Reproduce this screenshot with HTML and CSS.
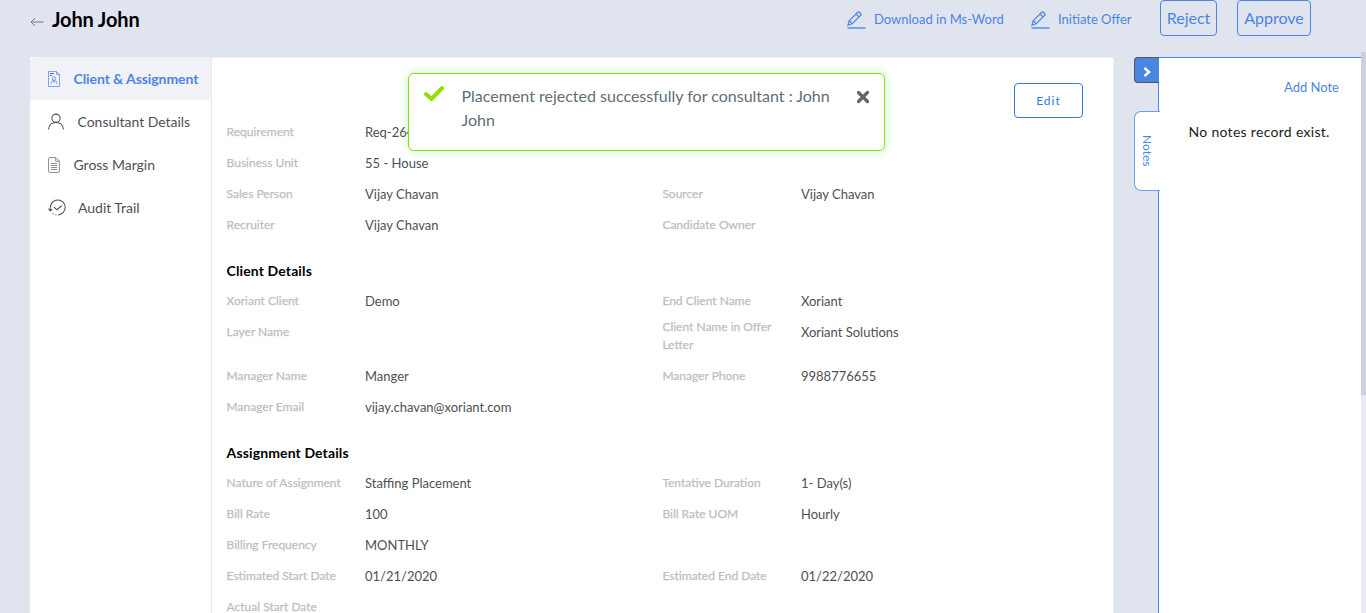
FILE: index.html
```html
<!DOCTYPE html>
<html lang="en">
<head>
<meta charset="utf-8">
<title>John John - Placement</title>
<link rel="stylesheet" href="styles.css">
</head>
<body>
<svg class="defs" width="0" height="0">
  <symbol id="pencil" viewBox="0 0 20 20">
    <path d="M1.800 15.300 3.300 10.700 11.900 2Q12.500 1.500 13.100 2L14.900 3.800Q15.500 4.400 14.900 5L6.300 13.700ZM3.300 10.700 6.300 13.700M10 4 13 6.900" fill="none" stroke="currentColor" stroke-width="1.200" stroke-linejoin="round"/>
    <path d="M1.500 18h18" stroke="currentColor" stroke-width="1.800" opacity=".75"/>
  </symbol>
</svg>
<header class="topbar">
  <svg class="back" viewBox="0 0 14 10"><path d="M13.500 5H1M5 1 1 5l4 4" fill="none" stroke="currentColor"/></svg>
  <h1 class="title">John John</h1>
  <nav class="actions">
    <a class="action download"><svg class="pencil"><use href="#pencil"/></svg><span>Download in Ms-Word</span></a>
    <a class="action offer"><svg class="pencil"><use href="#pencil"/></svg><span>Initiate Offer</span></a>
    <button class="btn reject"><span>Reject</span></button>
    <button class="btn approve"><span>Approve</span></button>
  </nav>
</header>
<main class="layout">
  <aside class="sidebar">
    <a class="side active"><svg class="ico-client" viewBox="0 0 12 16"><path d="M.5.5h8l3 3v12H.5zM8.500.5v3h3"/><path d="M2 2.500h4M2 4.500h2" stroke="#3462bd"/><circle cx="6" cy="7.500" r="1.700"/><path d="M3.200 13v-1.500Q3.500 9.500 6 9.500t2.800 2V13M5 10l1 1.300L7 10"/></svg><span>Client &amp; Assignment</span></a>
    <a class="side consultant"><svg class="ico-user" viewBox="0 0 16 16"><circle cx="8" cy="4.700" r="4.100"/><path d="M.6 16C.9 11.500 3.400 9 8 9s7.100 2.500 7.400 7"/></svg><span>Consultant Details</span></a>
    <a class="side margin"><svg class="ico-doc" viewBox="0 0 12 16"><path d="M2 .6h6L11.400 4v10q0 1.400-1.400 1.400H2Q.6 15.400.6 14V2Q.6.600 2 .6zM7.700.8v3.500h3.500M3 6.500h6M3 8.500h6M3 10.500h6M3 12.500h6"/></svg><span>Gross Margin</span></a>
    <a class="side audit"><svg class="ico-audit" viewBox="0 0 18 17"><path d="M2.300 11.700C1.500 5.500 4.500 1.200 9.500 1c4.500-.1 7.700 3.200 7.700 7.200 0 4.300-3.200 7.500-7.300 7.800M.5 9.700l1.800 2.200 2-1.700M6 8.100l2.800 2.700 5-4M4.500 14.500l1 .6M7.400 15.800l1 .2"/></svg><span>Audit Trail</span></a>
  </aside>
  <section class="details">
    <button class="edit"><span>Edit</span></button>
    <dl class="fields">
      <dt><span>Requirement</span></dt><dd><span>Req-264</span></dd><dt></dt><dd></dd>
      <dt><span>Business Unit</span></dt><dd><span>55 - House</span></dd><dt></dt><dd></dd>
      <dt><span>Sales Person</span></dt><dd><span>Vijay Chavan</span></dd><dt><span>Sourcer</span></dt><dd><span>Vijay Chavan</span></dd>
      <dt><span>Recruiter</span></dt><dd><span>Vijay Chavan</span></dd><dt><span>Candidate Owner</span></dt><dd></dd>
    </dl>
    <h2 class="section-title"><span>Client Details</span></h2>
    <dl class="fields">
      <dt><span>Xoriant Client</span></dt><dd><span>Demo</span></dd><dt><span>End Client Name</span></dt><dd><span>Xoriant</span></dd>
      <dt><span>Layer Name</span></dt><dd></dd><dt class="double"><span>Client Name in Offer Letter</span></dt><dd><span>Xoriant Solutions</span></dd>
      <dt><span>Manager Name</span></dt><dd><span>Manger</span></dd><dt><span>Manager Phone</span></dt><dd><span>9988776655</span></dd>
      <dt><span>Manager Email</span></dt><dd><span>vijay.chavan@xoriant.com</span></dd><dt></dt><dd></dd>
    </dl>
    <h2 class="section-title"><span>Assignment Details</span></h2>
    <dl class="fields">
      <dt><span>Nature of Assignment</span></dt><dd><span>Staffing Placement</span></dd><dt><span>Tentative Duration</span></dt><dd><span>1- Day(s)</span></dd>
      <dt><span>Bill Rate</span></dt><dd><span>100</span></dd><dt><span>Bill Rate UOM</span></dt><dd><span>Hourly</span></dd>
      <dt><span>Billing Frequency</span></dt><dd><span>MONTHLY</span></dd><dt></dt><dd></dd>
      <dt><span>Estimated Start Date</span></dt><dd><span>01/21/2020</span></dd><dt><span>Estimated End Date</span></dt><dd><span>01/22/2020</span></dd>
      <dt><span>Actual Start Date</span></dt><dd></dd><dt></dt><dd></dd>
    </dl>
  </section>
  <div class="tabs">
    <button class="collapse"><svg viewBox="0 0 8 10"><path d="M1.500 1 6 5 1.500 9" fill="none" stroke="#fff" stroke-width="2.500"/></svg></button>
    <a class="notes-tab"><span>Notes</span></a>
  </div>
  <aside class="notes">
    <a class="add-note">Add Note</a>
    <p class="empty">No notes record exist.</p>
  </aside>
  <div class="scroll"><div class="thumb"></div></div>
</main>
<div class="toast">
  <svg class="check" viewBox="0 0 20 16"><path d="M2 8 7.500 13 18 2.200" fill="none" stroke="#95dc08" stroke-width="4" stroke-linejoin="round" stroke-linecap="round"/></svg>
  <p class="message">Placement rejected successfully for consultant : John John</p>
  <svg class="close" viewBox="0 0 14 14"><path d="m2.500 2.500 9 9m0-9-9 9" stroke="#646464" stroke-width="3.200" stroke-linecap="round"/></svg>
</div>
</body>
</html>
```
FILE: styles.css
```css
* { box-sizing: border-box; }
body { margin: 0; height: 613px; overflow: hidden; background: #e0e4ef; font-family: Lato, "Open Sans", sans-serif; font-size: 14px; color: #4f5054; }
h1, h2, p, dl, dd { margin: 0; }
button { font: inherit; padding: 0; background: transparent; }
.defs { display: block; height: 0; }
.topbar { height: 57px; padding: 0 55px 0 30px; display: flex; align-items: flex-start; }
.back { width: 14px; height: 10px; margin-top: 17px; color: #77787e; }
.title { margin: 7px 0 0 8px; font-size: 20px; line-height: 24px; font-weight: 700; letter-spacing: -.15px; color: #000; white-space: nowrap; }
.actions { margin-left: auto; display: flex; align-items: flex-start; color: #4b85e2; }
.action { display: flex; align-items: center; height: 38px; font-size: 13px; white-space: nowrap; }
.pencil { width: 20px; height: 20px; margin: 2px 8px 0 0; }
.download { width: 184px; }
.offer { width: 130px; }
.btn { height: 36px; border: 1px solid #4b85e2; border-radius: 4px; color: #4b85e2; font-size: 16px; padding-bottom: 2px; }
.reject { width: 57px; margin-right: 20px; }
.approve { width: 74px; }
.layout { display: flex; height: 556px; }
.sidebar { width: 182px; margin-left: 30px; background: #fff; border-right: 1px solid #e9e9ed; flex: none; }
.side { display: flex; align-items: center; height: 43px; padding-left: 18px; white-space: nowrap; letter-spacing: -.02px; }
.side span { padding-bottom: 1px; }
.active { padding-top: 1px; background: #f1f2f8; color: #4b85e2; font-weight: 700; letter-spacing: -.08px; border-top-left-radius: 5px; }
.active span { padding-bottom: 2px; }
.side svg { flex: none; fill: none; stroke: currentColor; stroke-width: 1.1; }
.side .ico-client { stroke: #6c9bea; stroke-width: .9; }
.side .ico-doc { stroke: #8b8c90; stroke-width: 1; }
.ico-client, .ico-doc { width: 12px; height: 16px; margin-right: 13.500px; }
.ico-user { width: 16px; height: 17px; margin-right: 13.500px; }
.ico-audit { width: 18px; height: 17px; margin-right: 12px; }
.details { width: 902px; flex: none; background: #fff; border: 1px solid #eff0f4; border-width: 1px 1px 0 0; padding-left: 14.600px; }
.edit { display: block; width: 69px; height: 35px; margin: 25px 0 0 787.400px; border: 1px solid #3478df; border-radius: 4px; color: #3478df; font-size: 12px; letter-spacing: 1px; }
.fields { display: grid; grid-template-columns: 138.400px 297.400px 138.600px 200px; grid-auto-rows: minmax(31px, auto); }
.edit + .fields { margin-top: -2px; }
.fields dt { font-size: 12px; color: #bebebe; line-height: 18px; padding-top: 7px; -webkit-text-stroke: .25px #bebebe; }
.fields dd { font-size: 13px; line-height: 18px; padding-top: 7px; white-space: nowrap; }
.fields .double { height: 44px; padding-top: 2px; padding-right: 20px; }
.section-title { height: 45px; padding-top: 16px; line-height: 30px; font-size: 14px; font-weight: 700; letter-spacing: .12px; color: #000; }
.tabs { width: 26px; margin-left: 20px; flex: none; position: relative; z-index: 1; }
.collapse { display: flex; align-items: center; justify-content: center; width: 25px; height: 26px; border: 1px solid #50555e; border-right: 0; border-radius: 4px 0 0 4px; background: #4b85e2; padding-top: 3px; }
.collapse svg { width: 8px; height: 10px; }
.notes-tab { display: flex; align-items: center; justify-content: center; width: 26px; height: 80px; margin-top: 28px; background: #fff; border: 1px solid #6f9fe9; border-right: 0; border-radius: 7px 0 0 7px; color: #4b85e2; font-size: 12px; writing-mode: vertical-rl; }
.notes { width: 203px; margin-left: -2px; flex: none; background: #fff; border: 1px solid #4b85e2; border-width: 1px 0 0 1px; padding: 19px 22px 0 29.500px; }
.add-note { display: block; text-align: right; font-size: 13px; line-height: 20px; color: #4b85e2; }
.empty { margin-top: 25px; line-height: 20px; font-size: 14px; letter-spacing: .3px; color: #202124; white-space: nowrap; }
.scroll { width: 5px; height: 561px; margin-top: -5px; flex: none; background: #e9eaf4; }
.thumb { height: 343px; background: #ced0df; }
.toast { position: absolute; left: 408px; top: 73px; width: 477px; height: 78px; display: flex; background: #fff; border: 1px solid #95dc08; border-radius: 6px; box-shadow: 0 0 10px rgba(100, 225, 120, .45); color: #636d76; }
.check { width: 20px; height: 16px; margin: 12px 17.500px 0 15px; flex: none; }
.message { width: 385px; margin-top: 10px; font-size: 16px; line-height: 24px; }
.close { width: 14px; height: 14px; margin-top: 16px; margin-left: 9px; flex: none; }
```
